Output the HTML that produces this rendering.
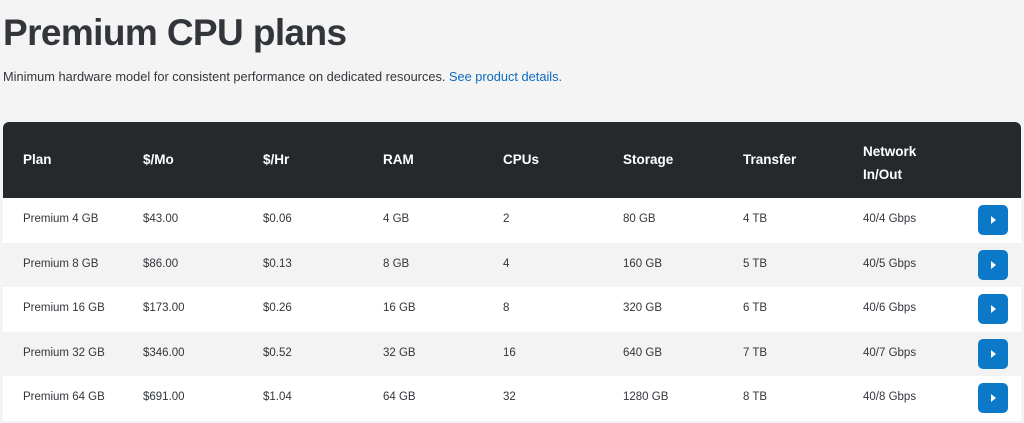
<!DOCTYPE html>
<html><head><style>
body{margin:0;background:#f4f4f4;font-family:"Liberation Sans",sans-serif;color:#32363b;width:1024px;height:423px;overflow:hidden;position:relative}
h1{position:absolute;left:3px;top:12px;margin:0;font-size:37px;font-weight:bold;color:#32363b;letter-spacing:-0.6px}
.sub{position:absolute;left:3px;top:69px;font-size:12.8px;color:#32363b}
.sub a{color:#0b6bbf;text-decoration:none}
.tbl{position:absolute;left:3px;top:122px;width:1018px;background:#fff;border-radius:6px 6px 0 0;overflow:hidden}
.hd{height:76px;background:#26292c;color:#fff;position:relative;font-weight:bold;font-size:13.5px}
.hd span{position:absolute;top:30px}
.hd .two{top:18px;line-height:23px}
.row{height:44.6px;position:relative;font-size:11.5px;background:#fff}
.row:nth-child(even){background:#f3f3f3}
.row span{position:absolute;top:15px}
.btn{position:absolute;left:975px;top:7px;width:30px;height:30px;background:#0b78c8;border-radius:5px}
.btn:after{content:"";position:absolute;left:13px;top:11px;border-left:5px solid #fff;border-top:4px solid transparent;border-bottom:4px solid transparent}
</style></head><body>
<h1>Premium CPU plans</h1>
<div class="sub">Minimum hardware model for consistent performance on dedicated resources. <a>See product details.</a></div>
<div class="tbl">
<div class="hd"><span style="left:20px">Plan</span><span style="left:140px">$/Mo</span><span style="left:260px">$/Hr</span><span style="left:380px">RAM</span><span style="left:500px">CPUs</span><span style="left:620px">Storage</span><span style="left:740px">Transfer</span><span class="two" style="left:860px">Network<br>In/Out</span></div>
<div>
<div class="row"><span style="left:20px">Premium 4 GB</span><span style="left:140px">$43.00</span><span style="left:260px">$0.06</span><span style="left:380px">4 GB</span><span style="left:500px">2</span><span style="left:620px">80 GB</span><span style="left:740px">4 TB</span><span style="left:860px">40/4 Gbps</span><div class="btn"></div></div>
<div class="row"><span style="left:20px">Premium 8 GB</span><span style="left:140px">$86.00</span><span style="left:260px">$0.13</span><span style="left:380px">8 GB</span><span style="left:500px">4</span><span style="left:620px">160 GB</span><span style="left:740px">5 TB</span><span style="left:860px">40/5 Gbps</span><div class="btn"></div></div>
<div class="row"><span style="left:20px">Premium 16 GB</span><span style="left:140px">$173.00</span><span style="left:260px">$0.26</span><span style="left:380px">16 GB</span><span style="left:500px">8</span><span style="left:620px">320 GB</span><span style="left:740px">6 TB</span><span style="left:860px">40/6 Gbps</span><div class="btn"></div></div>
<div class="row"><span style="left:20px">Premium 32 GB</span><span style="left:140px">$346.00</span><span style="left:260px">$0.52</span><span style="left:380px">32 GB</span><span style="left:500px">16</span><span style="left:620px">640 GB</span><span style="left:740px">7 TB</span><span style="left:860px">40/7 Gbps</span><div class="btn"></div></div>
<div class="row"><span style="left:20px">Premium 64 GB</span><span style="left:140px">$691.00</span><span style="left:260px">$1.04</span><span style="left:380px">64 GB</span><span style="left:500px">32</span><span style="left:620px">1280 GB</span><span style="left:740px">8 TB</span><span style="left:860px">40/8 Gbps</span><div class="btn"></div></div>
</div></div>
</body></html>
